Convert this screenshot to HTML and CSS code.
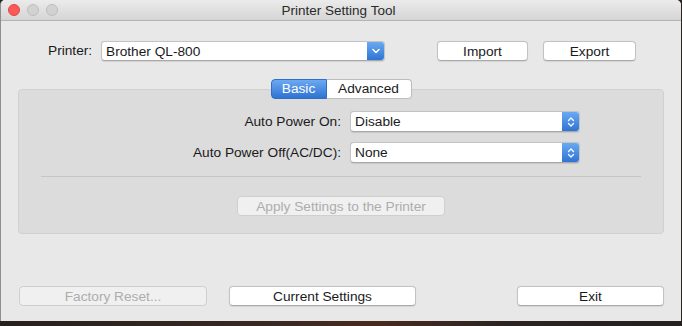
FILE: index.html
```html
<!DOCTYPE html>
<html lang="en">
<head>
  <meta charset="UTF-8" />
  <title>Printer Setting Tool</title>
  <link rel="stylesheet" href="styles.css">
</head>
<body>
  <div class="window">
    <div class="titlebar">
      <div class="lights">
        <span class="light close"></span>
        <span class="light"></span>
        <span class="light"></span>
      </div>
      <div class="title">Printer Setting Tool</div>
    </div>

    <div class="content">
      <div class="top-row">
        <span class="printer-label">Printer:</span>
        <div class="popup printer">
          <span class="popup-text">Brother QL-800</span>
          <span class="popup-arrow">
            <svg width="8" height="6" viewBox="0 0 8 6"><path d="M1 1.5 L4 4.5 L7 1.5" fill="none" stroke="#fff" stroke-width="1.5" stroke-linecap="round" stroke-linejoin="round"/></svg>
          </span>
        </div>
        <button class="btn import">Import</button>
        <button class="btn export">Export</button>
      </div>

      <div class="group">
        <div class="tabs">
          <span class="tab active">Basic</span>
          <span class="tab">Advanced</span>
        </div>

        <div class="form">
          <span class="form-label">Auto Power On:</span>
          <div class="popup setting">
            <span class="popup-text">Disable</span>
            <span class="popup-arrow">
              <svg width="8" height="12" viewBox="0 0 8 12"><path d="M1.5 4.5 L4 2 L6.5 4.5 M1.5 7.5 L4 10 L6.5 7.5" fill="none" stroke="#fff" stroke-width="1.3" stroke-linecap="round" stroke-linejoin="round"/></svg>
            </span>
          </div>
          <span class="form-label">Auto Power Off(AC/DC):</span>
          <div class="popup setting">
            <span class="popup-text">None</span>
            <span class="popup-arrow">
              <svg width="8" height="12" viewBox="0 0 8 12"><path d="M1.5 4.5 L4 2 L6.5 4.5 M1.5 7.5 L4 10 L6.5 7.5" fill="none" stroke="#fff" stroke-width="1.3" stroke-linecap="round" stroke-linejoin="round"/></svg>
            </span>
          </div>
        </div>

        <div class="separator"></div>

        <div class="apply-row">
          <button class="btn disabled apply">Apply Settings to the Printer</button>
        </div>
      </div>

      <div class="bottom-row">
        <button class="btn disabled reset">Factory Reset...</button>
        <button class="btn current">Current Settings</button>
        <button class="btn exit">Exit</button>
      </div>
    </div>
  </div>
  <div class="desktop"></div>
</body>
</html>
```

FILE: styles.css
```css
:root {
  --window-bg: #e8e8e8;
  --group-bg: #dcdcdc;
  --border: #b9b9b9;
  --text: #1a1a1a;
  --disabled: #adadad;
  --blue-top: #69a9f3;
  --blue-bottom: #2f74d4;
}

* {
  box-sizing: border-box;
}

body {
  margin: 0;
  width: 682px;
  height: 326px;
  overflow: hidden;
  background: #2b2321;
  font-family: 'Liberation Sans', Arial, sans-serif;
  font-size: 13.7px;
  color: var(--text);
}

.window {
  width: 681px;
  height: 321px;
  background: var(--window-bg);
  border-left: 1px solid #8e8e8e;
  border-radius: 5px 5px 0 0;
  display: flex;
  flex-direction: column;
  overflow: hidden;
}

.desktop {
  height: 5px;
  background: linear-gradient(90deg, #26201f, #3a2822 40%, #4a2a1e 55%, #2a2322 75%, #23201f);
}

/* title bar */
.titlebar {
  height: 21px;
  display: flex;
  align-items: center;
  background: linear-gradient(#ebebeb, #d5d5d5);
  border-bottom: 1px solid #b4b4b4;
}

.lights {
  display: flex;
  gap: 7px;
  padding-left: 7px;
}

.light {
  width: 12px;
  height: 12px;
  border-radius: 50%;
  background: #d2d2d2;
  border: 1px solid #bdbdbd;
}

.light.close {
  background: #fc5b55;
  border-color: #e2463f;
}

.title {
  flex: 1;
  text-align: center;
  margin-right: 62px;
  font-size: 13.5px;
  color: #2a2a2a;
}

/* content */
.content {
  flex: 1;
  display: flex;
  flex-direction: column;
  padding: 19px 17px 0 17px;
}

.top-row {
  display: flex;
  align-items: center;
  height: 21px;
  padding-left: 30px;
}

.printer-label {
  width: 53px;
}

.btn {
  height: 20px;
  padding: 0;
  font-family: inherit;
  font-size: 13.7px;
  color: var(--text);
  background: #fff;
  border: 1px solid #c2c2c2;
  border-bottom-color: #a9a9a9;
  border-radius: 4px;
  box-shadow: 0 0.5px 1px rgba(0, 0, 0, 0.08);
}

.btn.disabled {
  color: var(--disabled);
  background: #f0f0f0;
  border-color: #cfcfcf;
  box-shadow: none;
}

.btn.import {
  width: 91px;
  margin-left: 52px;
  margin-top: 1px;
}

.btn.export {
  width: 93px;
  margin-left: 15px;
  margin-top: 1px;
}

/* popups */
.popup {
  display: flex;
  align-items: stretch;
  background: #fff;
  border: 1px solid #c4c4c4;
  border-bottom-color: #a8a8a8;
  border-radius: 4px;
  box-shadow: 0 0.5px 1px rgba(0, 0, 0, 0.1);
  overflow: hidden;
}

.popup.printer {
  width: 284px;
  height: 20px;
}

.popup.setting {
  width: 230px;
  height: 21px;
}

.popup-text {
  flex: 1;
  padding-left: 4px;
  line-height: 19px;
}

.popup-arrow {
  width: 17px;
  display: flex;
  align-items: center;
  justify-content: center;
  background: linear-gradient(var(--blue-top), var(--blue-bottom));
}

/* group box */
.group {
  margin-top: 28px;
  height: 145px;
  background: var(--group-bg);
  border: 1px solid #d0d0d0;
  border-radius: 4px;
  display: flex;
  flex-direction: column;
}

.tabs {
  display: flex;
  justify-content: center;
  margin-top: -11px;
  height: 20px;
}

.tab {
  width: 85px;
  text-align: center;
  line-height: 18px;
  background: #fff;
  border: 1px solid #bcbcbc;
  border-left: none;
  border-radius: 0 4px 4px 0;
}

.tab.active {
  width: 56px;
  color: #fff;
  background: linear-gradient(#6ba9f1, #2f73d3);
  border: 1px solid #2e6fc8;
  border-radius: 4px 0 0 4px;
}

.form {
  display: grid;
  grid-template-columns: 322px 230px;
  column-gap: 9px;
  row-gap: 10px;
  align-items: center;
  margin-top: 12px;
}

.form-label {
  text-align: right;
}

.separator {
  margin: 13px 22px 0 22px;
  border-top: 1px solid #c6c6c6;
}

.apply-row {
  display: flex;
  justify-content: center;
  margin-top: 19px;
}

.btn.apply {
  width: 208px;
}

/* bottom buttons */
.bottom-row {
  display: flex;
  margin-top: 52px;
  padding-left: 1px;
}

.btn.reset {
  width: 188px;
}

.btn.current {
  width: 187px;
  margin-left: 22px;
}

.btn.exit {
  width: 147px;
  margin-left: 101px;
}
```
